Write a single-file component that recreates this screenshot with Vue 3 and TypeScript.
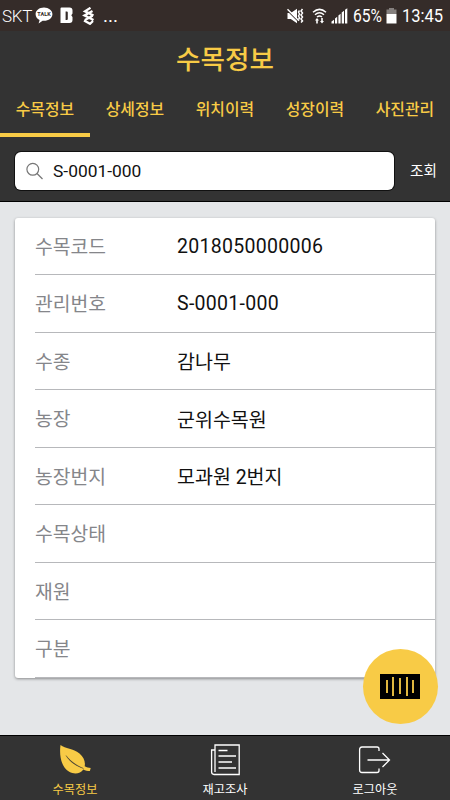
<script setup lang="ts">
import { ref } from 'vue'

interface Field {
  label: string
  value: string
  code?: boolean
}

const tabs: string[] = ['수목정보', '상세정보', '위치이력', '성장이력', '사진관리']
const activeTab = ref(0)
const query = ref('S-0001-000')

const fields: Field[] = [
  { label: '수목코드', value: '2018050000006', code: true },
  { label: '관리번호', value: 'S-0001-000', code: true },
  { label: '수종', value: '감나무' },
  { label: '농장', value: '군위수목원' },
  { label: '농장번지', value: '모과원 2번지' },
  { label: '수목상태', value: '' },
  { label: '재원', value: '' },
  { label: '구분', value: '' },
]
</script>

<template>
  <div class="screen">
    <div class="status">
      <span class="carrier">SKT</span>
      <svg class="talk" width="18" height="17" viewBox="0 0 18 17">
        <path d="M9 .5C4.300.5.6 3.400.6 7.200c0 2.500 1.600 4.600 4 5.800L3.600 16.400l4-2.700 1.400.1c4.700 0 8.400-2.900 8.400-6.600S13.700.5 9 .5z" fill="#fff" />
        <text x="9" y="9.200" text-anchor="middle" class="talk-text">TALK</text>
      </svg>
      <svg class="band" width="13" height="17" viewBox="0 0 13 17">
        <path fill="#fff" fill-rule="evenodd" d="M1.500.5h8q3 0 3 3v3l-1.200 1.800 1.200 1.800v3q0 3-3 3H.5v-14.600q0-1 1-1zM5.600 4.500v8.500h1.200q1 0 1-1v-6.500q0-1-1-1z" />
      </svg>
      <svg class="knot" width="13" height="18" viewBox="0 0 13 18">
        <g fill="none" stroke="#fff" stroke-width="2.300">
          <path d="M8.500.8 3 4.300l8.500 4.200M10.500 4 2.500 8.500l9 4.500M10.500 8.800 3 13M2 13.500l6 3.300 3-2.800" />
        </g>
      </svg>
      <span class="dots">...</span>
      <span class="spacer"></span>
      <svg class="mute" width="17" height="16" viewBox="0 0 17 16">
        <path d="M.5 5h3.300L10 .8v14.400L3.800 11H.5z" fill="#fff" />
        <path d="M.5 2.600 11.500 13.600" stroke="#352c29" stroke-width="1.200" />
        <path d="m.5 1.200 11.500 11.500" stroke="#fff" stroke-width="1.400" />
        <path d="m12.500 2.500-1 1.500 1 2-1 2 1 2-1 1.500M15.500 1l-1.500 2 1.500 2-1.500 2 1.500 2-1.500 2 1.500 2-1.500 1.500" fill="none" stroke="#fff" stroke-width="1.500" />
      </svg>
      <svg class="wifi" width="15" height="16" viewBox="0 0 15 16">
        <g fill="none" stroke="#fff" stroke-width="1.500">
          <path d="M1 4.300Q7.500-1.500 14 4.300M3 6.700q4.500-3.900 9 0M5 9q2.500-2 5 0" />
        </g>
        <path d="m5 10 2 2.500H5.800v3H4.200v-3H3zm5 5.500-2-2.500h1.200v-3h1.600v3H12z" fill="#fff" />
      </svg>
      <svg class="signal" width="17" height="16" viewBox="0 0 17 16">
        <path d="M.5 15.500v-2l2.500-1.700v3.700zM4 15.500v-5l2.200-1.800v6.800zM7.400 15.500v-8l2.200-1.800v9.800zM10.700 15.500v-11l2.300-1.800v12.800zM14 15.500V1.800l2.300-1.600v15.300z" fill="#fff" />
      </svg>
      <span class="percent">65%</span>
      <svg class="battery" width="11" height="16" viewBox="0 0 11 16">
        <path d="M3 0h5v1.500h2.500V6H.5V1.500H3z" fill="#85807e" />
        <path d="M.5 6h10v9.500H.5z" fill="#fff" />
      </svg>
      <span class="clock">13:45</span>
    </div>

    <header class="header">
      <h1 class="title">수목정보</h1>
      <nav class="tabs">
        <button
          v-for="(tab, index) in tabs"
          :key="tab"
          class="tab"
          :class="{ active: index === activeTab }"
          @click="activeTab = index"
        >{{ tab }}</button>
      </nav>
      <div class="search">
        <label class="box">
          <svg width="18" height="18" viewBox="0 0 18 18" fill="none" stroke="#777" stroke-width="1.200">
            <circle cx="6.800" cy="7.300" r="5.900" />
            <path d="m11 11.500 5.500 5.500" />
          </svg>
          <input v-model="query" class="input" type="text" />
        </label>
        <button class="lookup">조회</button>
      </div>
    </header>

    <main class="content">
      <dl class="card">
        <div v-for="field in fields" :key="field.label" class="row">
          <dt class="label">{{ field.label }}</dt>
          <dd class="value" :class="{ code: field.code }">{{ field.value }}</dd>
        </div>
      </dl>
      <button class="scan">
        <svg width="40" height="25" viewBox="0 0 40 25">
          <path d="M0 0h40v25H0z" fill="#000" />
          <path d="M7 6v13M13 3v19M20 4v16M27 3v19M33 6v13" stroke="#f8cb46" stroke-width="1.800" />
        </svg>
      </button>
    </main>

    <footer class="bottom">
      <button class="item active">
        <svg width="34" height="32" viewBox="0 0 34 32">
          <path d="M2.500 1C7.500 4.800 15 4.200 21.500 9.500c4.500 3.800 6 8.500 5.200 12.800 2 1 3.800 1.600 6 1.600l-.8 3.100c-2.500 0-4.500-.5-6.600-1.600-2.800 4.300-8.800 5.200-14.100 2.400C3.500 23.500 1 12 2.500 1z" fill="#f8cb46" />
          <path d="M8 11.500c4 5.200 9.500 9.400 17.500 13-8-2.800-14-7-17.500-13z" fill="#333" stroke="#333" stroke-width=".3" />
        </svg>
        <span>수목정보</span>
      </button>
      <button class="item">
        <svg width="34" height="32" viewBox="0 0 34 32" fill="none" stroke="#fff" stroke-width="1.300">
          <path d="M7 1h24.200v29.500H6q-2.400 0-2.400-2.400V6H7zM7 6v22" />
          <path d="M10.500 6.500h9M10.500 12h17.500M10.500 18h13.500M10.500 24h17.500" />
        </svg>
        <span>재고조사</span>
      </button>
      <button class="item">
        <svg width="34" height="32" viewBox="0 0 34 32" fill="none" stroke="#fff" stroke-width="1.300">
          <path d="M21 7V5q0-2-2-2H4Q1.600 3 1.600 5.500v20.500q0 2.500 2.400 2.500h15q2 0 2-2v-2" />
          <path d="M9.500 16h22M24.500 9l7 7-7 7" />
        </svg>
        <span>로그아웃</span>
      </button>
    </footer>
  </div>
</template>

<style>
body {
  margin: 0;
}
</style>

<style scoped>
.screen {
  display: flex;
  flex-direction: column;
  box-sizing: border-box;
  width: 450px;
  height: 800px;
  overflow: hidden;
  background: #e4e6e8;
  font-family: Roboto, 'Noto Sans CJK KR', sans-serif;
}

button {
  margin: 0;
  padding: 0;
  border: 0;
  background: none;
  color: inherit;
  font: inherit;
}

.status {
  display: flex;
  align-items: center;
  box-sizing: border-box;
  flex: none;
  height: 31px;
  padding: 0 7px 0 2px;
  background: #352c29;
  color: #fff;
  font-size: 19px;
  white-space: nowrap;
}

.spacer {
  flex: 1;
}

.carrier {
  width: 33px;
  font-size: 17px;
  font-weight: 300;
  letter-spacing: -0.3px;
}

.talk-text {
  fill: #352c29;
  font-size: 5.5px;
  font-weight: 700;
}

.band {
  margin-left: 7px;
}

.knot {
  margin-left: 9px;
}

.dots {
  margin-left: 8px;
}

.wifi {
  margin-left: 8px;
}

.signal {
  margin-left: 4px;
}

.percent {
  width: 30px;
  margin-left: 5px;
}

.percent,
.clock {
  display: inline-block;
  transform-origin: left center;
}

.percent {
  transform: scaleX(0.82);
}

.battery {
  margin-left: 3px;
}

.clock {
  width: 41px;
  margin-left: 5px;
  transform: scaleX(0.87);
}

.header {
  display: flex;
  flex-direction: column;
  box-sizing: border-box;
  flex: none;
  height: 171px;
  border-bottom: 1px solid #000;
  background: #333;
  color: #f8cb46;
}

.title {
  height: 56px;
  margin: 0;
  font-size: 26.600px;
  font-weight: 500;
  line-height: 58px;
  text-align: center;
}

.tabs {
  display: grid;
  grid-template-columns: repeat(5, 1fr);
  height: 50px;
}

.tab {
  box-sizing: border-box;
  border-bottom: 4px solid transparent;
  font-size: 15.900px;
  font-weight: 500;
  line-height: 42px;
}

.tab.active {
  border-bottom-color: #f8cb46;
}

.search {
  display: flex;
  align-items: center;
  padding: 15px 12px 0 15px;
}

.box {
  display: flex;
  align-items: center;
  gap: 9px;
  box-sizing: border-box;
  width: 379px;
  height: 38px;
  padding-left: 11px;
  border-radius: 6px;
  background: #fff;
  box-shadow: 0 0 0 1px #111;
}

.input {
  flex: 1;
  min-width: 0;
  padding: 0;
  border: 0;
  outline: 0;
  background: none;
  color: #111;
  font: inherit;
  font-size: 17.400px;
}

.lookup {
  margin-left: 16px;
  padding-bottom: 4px;
  color: #fff;
  font-size: 14.600px;
  white-space: nowrap;
}

.content {
  position: relative;
  flex: 1;
  padding: 15.500px 15px 0;
}

.card {
  margin: 0;
  padding-left: 20px;
  border-radius: 3px;
  background: #fff;
  box-shadow: 0 1px 3px rgba(0, 0, 0, 0.4);
}

.row {
  display: flex;
  align-items: center;
  box-sizing: border-box;
  height: 57.500px;
  border-bottom: 1px solid #b7b8bb;
}

.label {
  width: 142px;
  color: #85868a;
  font-size: 19.300px;
}

.value {
  margin: 0;
  color: #111;
  font-size: 19.500px;
}

.value.code {
  padding-top: 1px;
  letter-spacing: 0.300px;
}

.scan {
  position: absolute;
  right: 12.500px;
  bottom: 11.500px;
  display: flex;
  align-items: center;
  justify-content: center;
  width: 75px;
  height: 75px;
  border-radius: 50%;
  background: #f8cb46;
}

.bottom {
  display: grid;
  grid-template-columns: repeat(3, 1fr);
  box-sizing: border-box;
  flex: none;
  height: 65px;
  border-top: 1px solid #000;
  background: #333;
  color: #fff;
}

.item {
  display: flex;
  flex-direction: column;
  align-items: center;
  padding-top: 8px;
  font-size: 12.200px;
  line-height: 18px;
}

.item span {
  margin-top: 5px;
}

.item.active {
  color: #f8cb46;
}
</style>
